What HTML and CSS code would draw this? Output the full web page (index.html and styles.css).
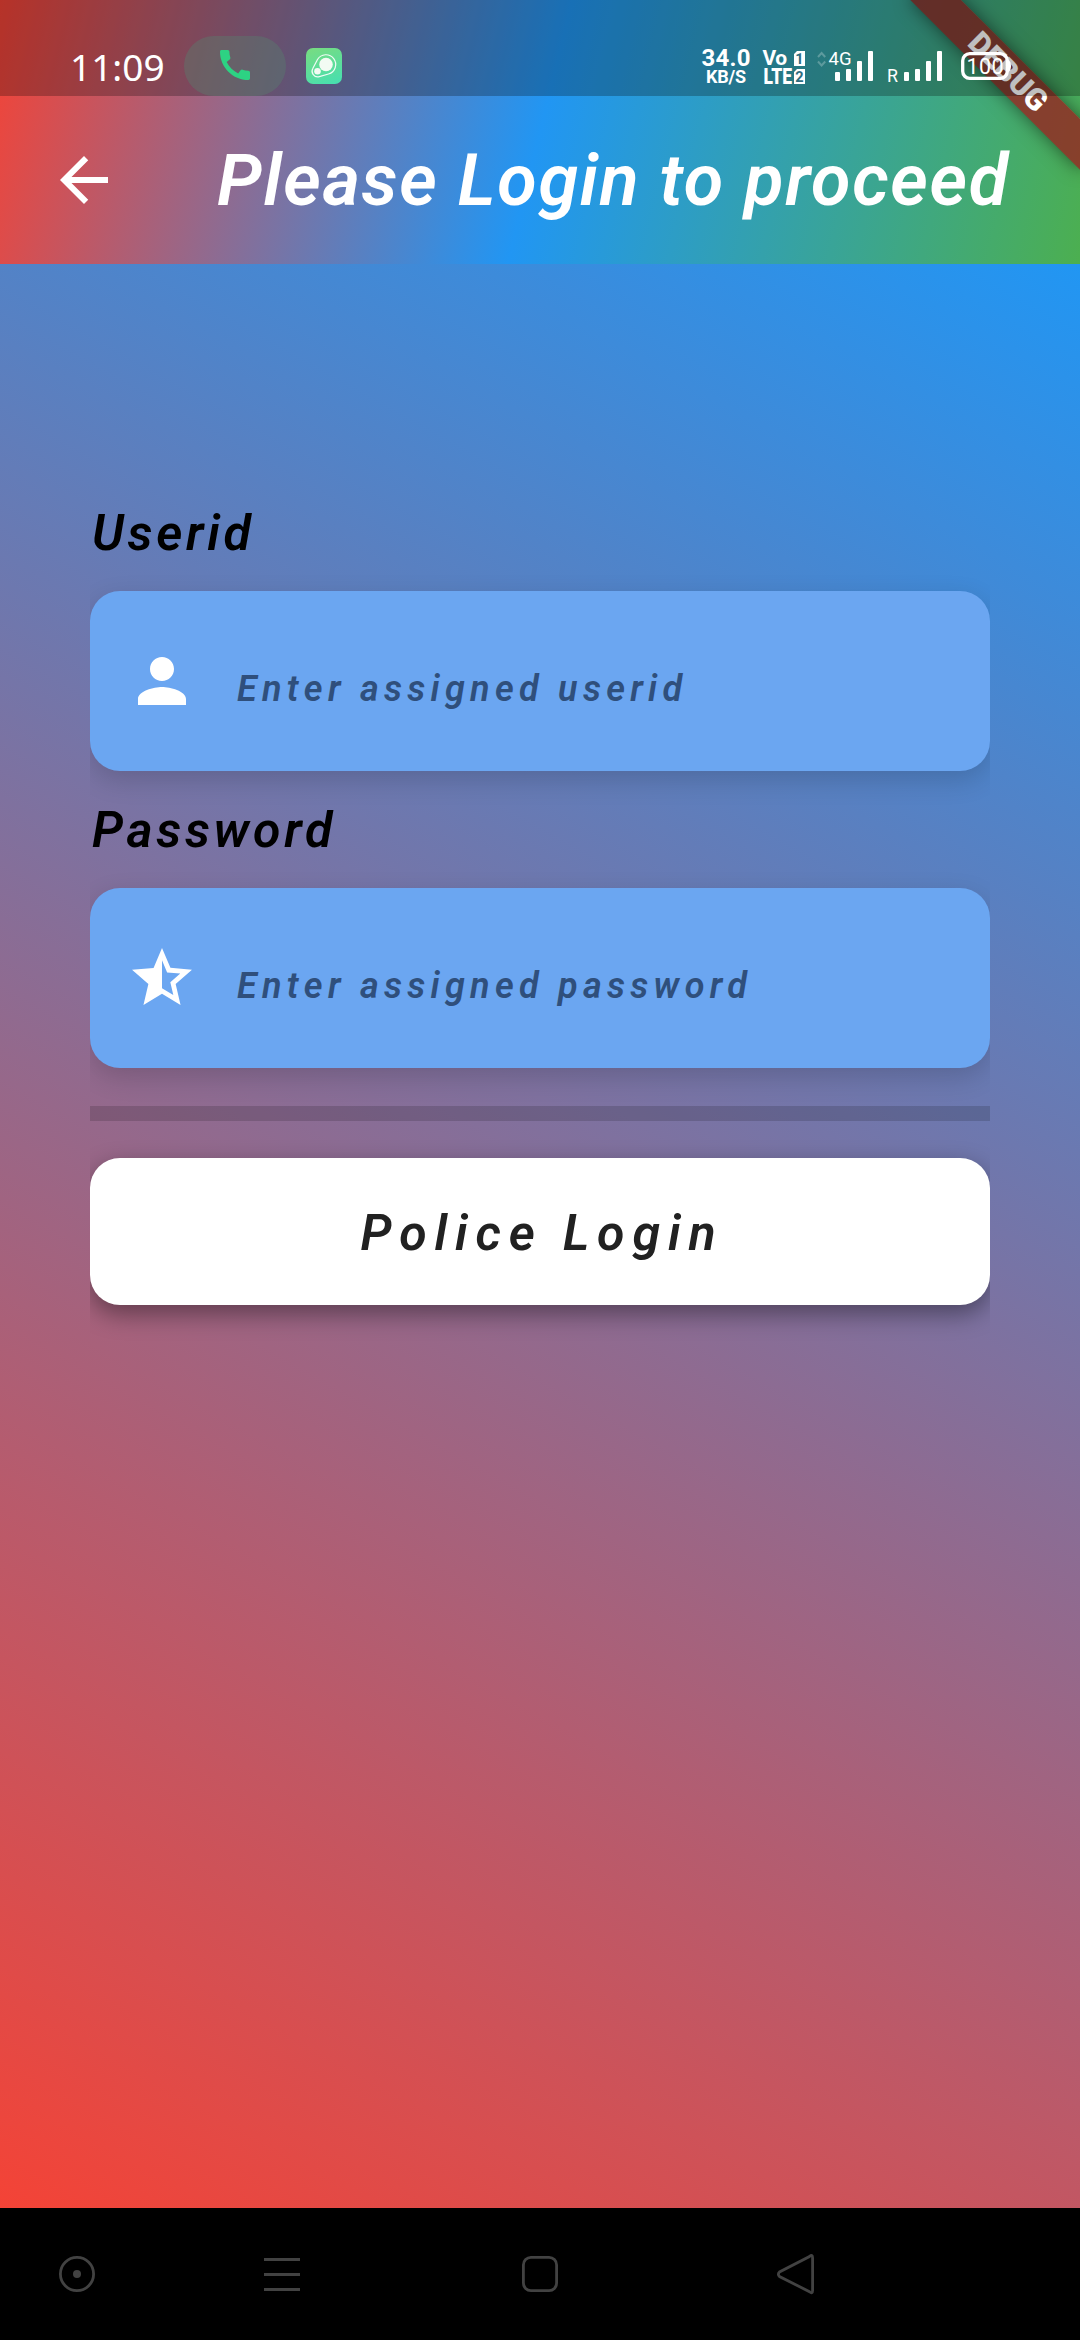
FILE: index.html
```html
<!DOCTYPE html>
<html lang="en">
<head>
<meta charset="utf-8">
<title>Police Login</title>
<link rel="stylesheet" href="styles.css">
</head>
<body>
<div class="screen">
  <header class="app-header">
    <div class="debug-ribbon">DEBUG</div>
    <div class="status-bar">
      <span class="clock">11:09</span>
      <span class="call-pill">
        <svg width="40" height="40" viewBox="0 0 24 24" fill="#2dd283"><path d="M20.01 15.38c-1.23 0-2.42-.2-3.53-.56-.35-.12-.74-.03-1.01.24l-1.57 1.97c-2.83-1.35-5.48-3.9-6.89-6.83l1.95-1.66c.27-.28.35-.67.24-1.02-.37-1.11-.56-2.3-.56-3.53 0-.54-.45-.99-.99-.99H4.19C3.65 3 3 3.24 3 3.99 3 13.28 10.73 21 20.01 21c.71 0 .99-.63.99-1.18v-3.45c0-.54-.45-.99-.99-.99z"/></svg>
      </span>
      <span class="app-badge">
        <svg width="36" height="36" viewBox="0 0 36 36">
          <path d="M11.500 11.500A9.800 9.800 0 1 1 22.500 26L12.500 28.800A5.600 5.600 0 0 1 6.800 20.500Z" fill="none" stroke="#fff" stroke-opacity=".9" stroke-width="1.200"/>
          <circle cx="20" cy="16.500" r="6.800" fill="#f2fbf3"/>
          <circle cx="11.500" cy="23.300" r="3.300" fill="#f2fbf3"/>
        </svg>
      </span>
      <svg class="network" width="320" height="48" viewBox="700 44 320 48" fill="#fff">
        <g class="bold">
          <text x="701.500" y="66.300" font-size="24" textLength="49">34.0</text>
          <text x="706" y="83.200" font-size="18" textLength="40">KB/S</text>
          <text x="762.500" y="65.300" font-size="21" textLength="24.500">Vo</text>
          <text x="763.500" y="83.500" font-size="21.500" textLength="28.500" class="tight" lengthAdjust="spacingAndGlyphs">LTE</text>
        </g>
        <path d="M797 51h8v15h-11V54zM797 69h8v15h-11V72z"/>
        <g class="bold" fill="#2d6d80" font-size="14.500"><text x="795.300" y="63.800">1</text><text x="795.300" y="81.800">2</text></g>
        <path d="M818 57l3.600-4 3.600 4M818 61.500l3.600 4 3.600-4" fill="none" stroke="#fff" stroke-opacity=".25" stroke-width="2"/>
        <text x="828.500" y="65.300" font-size="19" textLength="23" lengthAdjust="spacingAndGlyphs">4G</text>
        <g>
          <rect x="835" y="72" width="5" height="9" rx="1"/><rect x="846" y="69" width="5" height="12" rx="1"/><rect x="857" y="61" width="5" height="20" rx="1"/><rect x="868" y="51" width="5" height="30" rx="1"/>
          <rect x="904" y="72" width="5" height="9" rx="1"/><rect x="915" y="69" width="5" height="12" rx="1"/><rect x="926" y="61" width="5" height="20" rx="1"/><rect x="937" y="51" width="5" height="30" rx="1"/>
        </g>
        <text x="887" y="82" font-size="17.500" textLength="11" lengthAdjust="spacingAndGlyphs">R</text>
        <rect x="962.700" y="53.700" width="44.600" height="24.600" rx="7" fill="none" stroke="#fff" stroke-width="3.300"/>
        <path d="M1008 60q3 1 3 6t-3 6z"/>
        <text x="966.500" y="73.800" font-size="21.500" class="light" textLength="37">100</text>
      </svg>
    </div>
    <div class="toolbar">
      <svg width="72" height="72" viewBox="0 0 24 24" fill="#fff"><path d="M20 11H7.830l5.590-5.590L12 4l-8 8 8 8 1.410-1.410L7.830 13H20v-2z"/></svg>
      <h1 class="title">Please Login to proceed</h1>
    </div>
  </header>

  <main class="login">
    <label class="label">Userid</label>
    <div class="field">
      <svg width="72" height="72" viewBox="0 0 24 24" fill="#fff"><path d="M12 12c2.210 0 4-1.790 4-4s-1.790-4-4-4-4 1.790-4 4 1.790 4 4 4zm0 2c-2.670 0-8 1.340-8 4v2h16v-2c0-2.660-5.330-4-8-4z"/></svg>
      <span class="hint">Enter assigned userid</span>
    </div>
    <label class="label">Password</label>
    <div class="field">
      <svg width="72" height="72" viewBox="0 0 24 24" fill="#fff"><path d="M22 9.240l-7.190-.62L12 2 9.190 8.630 2 9.240l5.460 4.730L5.820 21 12 17.270 18.180 21l-1.630-7.030L22 9.240zM12 15.400V6.100l1.710 4.040 4.380.38-3.320 2.880 1 4.280L12 15.400z"/></svg>
      <span class="hint">Enter assigned password</span>
    </div>
    <div class="divider"></div>
    <div class="button">Police Login</div>
  </main>

  <nav class="nav-bar">
    <svg width="44" height="44" viewBox="0 0 44 44"><circle cx="22" cy="22" r="16.600"/><circle cx="22" cy="22" r="4" class="dot"/></svg>
    <svg width="44" height="44" viewBox="0 0 44 44"><path d="M4 7.500h36M4 22.500h36M4 37.500h36"/></svg>
    <svg width="44" height="44" viewBox="0 0 44 44"><rect x="5.400" y="5.400" width="33.200" height="33.200" rx="7.500"/></svg>
    <svg width="44" height="44" viewBox="0 0 44 44"><path d="M35.500 4.500Q38.600 1.700 38.600 6V38.500Q38.600 42.300 35.500 39.700L5.500 24.500Q3.200 22.300 5.500 20Z"/></svg>
  </nav>
</div>
</body>
</html>
```
FILE: styles.css
```css
* { box-sizing: border-box; }
body { margin: 0; background: #000; font-family: Roboto, sans-serif; }
svg { display: block; flex: none; }

.screen {
  width: 1080px;
  height: 2340px;
  display: flex;
  flex-direction: column;
  overflow: hidden;
}

.app-header {
  position: relative;
  height: 264px;
  flex: none;
  background: linear-gradient(103.740deg, #f44336, #2196f3 50%, #4caf50);
  overflow: hidden;
}

.debug-ribbon {
  position: absolute;
  left: 960px;
  top: 84px;
  width: 240px;
  height: 36px;
  transform-origin: 120px -84px;
  transform: rotate(45deg);
  background: rgba(150, 36, 32, .8);
  box-shadow: 0 0 18px rgba(0, 0, 0, .5);
  color: #fff;
  font-size: 30.600px;
  font-weight: 900;
  line-height: 36px;
  text-align: center;
}

.status-bar {
  position: relative;
  height: 96px;
  padding: 36px 0 0 70px;
  display: flex;
  background: rgba(0, 0, 0, .25);
}
.clock {
  width: 114px;
  color: #fff;
  font: 37px/62px "Noto Sans", sans-serif;
  letter-spacing: 0;
}
.call-pill {
  width: 102px;
  height: 60px;
  padding: 9px 0 0 31px;
  border-radius: 30px;
  background: rgba(88, 128, 110, .4);
}
.app-badge {
  width: 36px;
  height: 36px;
  margin: 12px 358px 0 20px;
  border-radius: 7px;
  background: linear-gradient(160deg, #79dc80, #45dfb2);
}
.network { margin-top: 8px; font-family: Roboto, sans-serif; }
.bold { font-weight: 700; }
.tight { font-weight: 900; }
.light { font-weight: 400; }

.toolbar {
  height: 168px;
  padding-left: 48px;
  display: flex;
  align-items: center;
}
.title {
  margin: 2px 0 0 97px;
  color: #fff;
  font-size: 72px;
  font-style: italic;
  font-weight: 600;
  letter-spacing: 1.650px;
  line-height: 84px;
  white-space: nowrap;
}

.login {
  flex: 1;
  padding: 239px 90px 0;
  background: linear-gradient(29.050deg, #f44336, #2196f3);
}
.label {
  display: block;
  height: 88px;
  margin-bottom: 0;
  padding-left: 2px;
  color: #000;
  font-size: 50px;
  font-style: italic;
  font-weight: 600;
  letter-spacing: 3.700px;
  line-height: 60px;
}
.field {
  height: 180px;
  margin-bottom: 29px;
  padding-left: 36px;
  display: flex;
  align-items: center;
  border-radius: 30px;
  background: #6ba6f1;
  box-shadow: 0 9px 27px rgba(0, 0, 0, .16);
  clip-path: inset(-40px 0 -60px);
}
.hint {
  margin: 15px 0 0 39px;
  color: #2f4f7c;
  font-size: 36px;
  font-style: italic;
  font-weight: 600;
  letter-spacing: 5.300px;
  line-height: 42px;
}
.divider {
  height: 15px;
  margin: 37.500px 0;
  background: rgba(0, 0, 0, .15);
}
.button {
  height: 147px;
  padding: 1px 0 0 4px;
  border-radius: 30px;
  background: #fff;
  box-shadow: 0 9px 24px rgba(0, 0, 0, .4);
  clip-path: inset(-40px 0 -60px);
  color: #212121;
  font-size: 50px;
  font-style: italic;
  font-weight: 600;
  letter-spacing: 7.900px;
  line-height: 148px;
  text-align: center;
}

.nav-bar {
  height: 132px;
  padding: 44px 262px 0 55px;
  display: grid;
  grid-template-columns: 205px 258px 256px 44px;
  background: #000;
}
.nav-bar svg { fill: none; stroke: #424242; stroke-width: 2.800; }
.nav-bar .dot { fill: #424242; stroke: none; }
```
